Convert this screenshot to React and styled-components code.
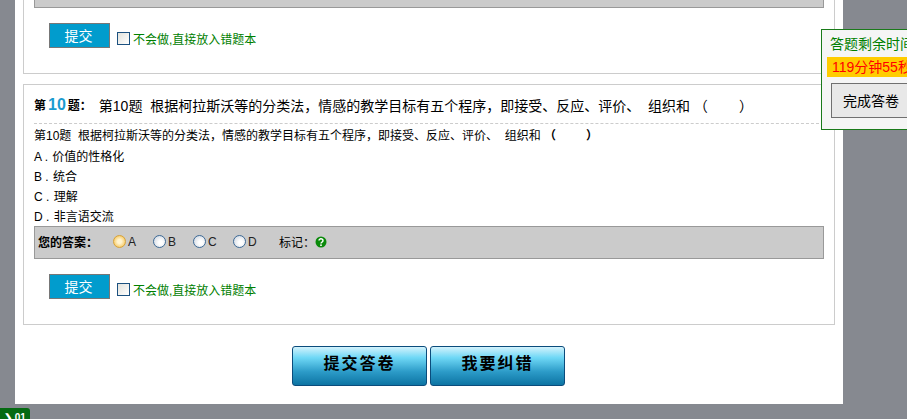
import { createGlobalStyle } from 'styled-components';
import styled from 'styled-components';

const GlobalStyle = createGlobalStyle`
  html, body {
    margin: 0;
    padding: 0;
    height: 100%;
    overflow: hidden;
    background: #868990;
    font-family: "Liberation Sans", "Noto Sans CJK SC", sans-serif;
    font-size: 12px;
    color: #000;
  }
`;

const OPTIONS = [
  { key: 'A', text: '价值的性格化', checked: true },
  { key: 'B', text: '统合' },
  { key: 'C', text: '理解' },
  { key: 'D', text: '非言语交流' },
];

const STEM = '第10题  根据柯拉斯沃等的分类法，情感的教学目标有五个程序，即接受、反应、评价、  组织和 （        ）';

function AnswerPanel({ name }) {
  return (
    <App.AnswerBar>
      <App.AnswerLabel>您的答案：</App.AnswerLabel>
      {OPTIONS.map((o) => (
        <App.Choice key={o.key}>
          <App.Radio type="radio" name={name} defaultChecked={o.checked} />
          {o.key}
        </App.Choice>
      ))}
      <App.Mark>
        标记：
        <svg width="12" height="12" viewBox="0 0 12 12">
          <circle cx="6" cy="6" r="5.5" fill="#0a8a0a" />
          <path d="M4 4.6a2 1.9 0 1 1 3 1.6c-.7.4-1 .7-1 1.4" fill="none" stroke="#fff" strokeWidth="1.5" />
          <rect x="5.2" y="8.4" width="1.6" height="1.6" fill="#fff" />
        </svg>
      </App.Mark>
    </App.AnswerBar>
  );
}

function SubmitRow() {
  return (
    <App.SubmitRow>
      <App.SubmitButton type="button">提交</App.SubmitButton>
      <App.WrongBook>
        <App.Check type="checkbox" />
        不会做,直接放入错题本
      </App.WrongBook>
    </App.SubmitRow>
  );
}

function App() {
  return (
    <>
      <GlobalStyle />
      <App.Page>
        <App.Card $cut>
          <App.BarEnd />
          <SubmitRow />
        </App.Card>
        <App.Card>
          <App.Title>
            <App.TitleNo>
              第<b>10</b>题：
            </App.TitleNo>
            <App.TitleText>{STEM}</App.TitleText>
          </App.Title>
          <App.Stem>第10题  根据柯拉斯沃等的分类法，情感的教学目标有五个程序，即接受、反应、评价、  组织和 <strong>（         ）</strong></App.Stem>
          {OPTIONS.map((o) => (
            <App.Option key={o.key}>{o.key} . <span>{o.text}</span></App.Option>
          ))}
          <AnswerPanel name="q10" />
          <SubmitRow />
        </App.Card>
        <App.Actions>
          <App.BigButton type="button">提交答卷</App.BigButton>
          <App.BigButton type="button">我要纠错</App.BigButton>
        </App.Actions>
      </App.Page>
      <App.Timer>
        <App.TimerTitle>答题剩余时间</App.TimerTitle>
        <App.TimerValue>119分钟55秒</App.TimerValue>
        <App.FinishButton type="button">完成答卷</App.FinishButton>
      </App.Timer>
      <App.Badge>❯ 01</App.Badge>
    </>
  );
}

App.Page = styled.div`
  box-sizing: border-box;
  width: 828px;
  height: 404px;
  margin-left: 15px;
  padding: 0 8px;
  background: #fff;
`;

App.Card = styled.div`
  box-sizing: border-box;
  border: 1px solid #ccc;
  border-top-width: ${(p) => (p.$cut ? 0 : '1px')};
  padding: 0 10px 25px;
  margin-bottom: 10px;
`;

App.BarEnd = styled.div`
  height: 7px;
  background: #cbcbcb;
  border: 1px solid #999;
  border-top: 0;
`;

App.AnswerBar = styled.div`
  box-sizing: border-box;
  height: 33px;
  display: flex;
  align-items: center;
  padding: 0 0 2px 3px;
  background: #cbcbcb;
  border: 1px solid #999;
`;

App.AnswerLabel = styled.b`
  width: 75px;
  font-size: 12px;
`;

App.Choice = styled.label`
  display: flex;
  align-items: center;
  width: 40px;
  font-size: 12px;
  color: #222;
`;

App.Radio = styled.input`
  appearance: none;
  box-sizing: border-box;
  width: 13px;
  height: 13px;
  margin: 0 2px 0 0;
  border-radius: 50%;
  border: 1px solid #3d6a96;
  background: radial-gradient(circle at 60% 60%, #fff 20%, #d4dbe4 80%);
  &:checked {
    border-color: #d7a23a;
    background: radial-gradient(circle, #fff3cf 25%, #f5c24e 90%);
  }
`;

App.Mark = styled.span`
  display: flex;
  align-items: center;
  margin-left: 6px;
  font-size: 12px;
`;

App.SubmitRow = styled.div`
  display: flex;
  align-items: flex-start;
  padding: 15px 0 0 15px;
`;

App.SubmitButton = styled.button`
  box-sizing: border-box;
  width: 61px;
  height: 25px;
  padding: 0 2px 2px 0;
  border: 1px solid #777;
  background: #019ccd;
  color: #fff;
  font: 14px "Liberation Sans", "Noto Sans CJK SC", sans-serif;
`;

App.WrongBook = styled.label`
  display: flex;
  align-items: center;
  margin: 8px 0 0 7px;
  height: 15px;
  color: #008000;
  font-size: 12px;
`;

App.Check = styled.input`
  appearance: none;
  box-sizing: border-box;
  width: 13px;
  height: 13px;
  margin: 0 3px 0 0;
  border: 1px solid #1c5180;
  background: linear-gradient(135deg, #e2e2dc, #fff);
`;

App.Title = styled.div`
  display: flex;
  align-items: center;
  box-sizing: content-box;
  height: 37px;
  padding-top: 1px;
  border-bottom: 1px dashed #ccc;
  overflow: hidden;
`;

App.TitleNo = styled.span`
  font-size: 12px;
  font-weight: bold;
  margin-right: 7px;
  b {
    font-size: 16px;
    color: #1a9bd0;
    margin: 0 2px;
  }
`;

App.TitleText = styled.span`
  font-size: 14px;
  white-space: pre;
`;

App.Stem = styled.div`
  height: 22px;
  line-height: 24px;
  white-space: pre;
  font-size: 12px;
`;

App.Option = styled.div`
  height: 20px;
  line-height: 22px;
  font-size: 12px;
  white-space: pre;
  span {
    margin-left: 1px;
  }
`;

App.Actions = styled.div`
  display: flex;
  justify-content: center;
  gap: 3px;
  padding: 11px 1px 0 0;
`;

App.BigButton = styled.button`
  box-sizing: border-box;
  width: 135px;
  height: 40px;
  padding: 0 0 8px;
  border: 1px solid #0b4c7c;
  border-radius: 3px;
  background: linear-gradient(#d3f2fc, #6fd8f6 28%, #2c9bc8 65%, #0d74a3);
  color: #000;
  font: bold 16px "Liberation Sans", "Noto Sans CJK SC", sans-serif;
  letter-spacing: 2px;
`;

App.Timer = styled.div`
  position: fixed;
  left: 821px;
  top: 29px;
  box-sizing: border-box;
  width: 130px;
  height: 101px;
  padding-top: 4px;
  border: 1px solid #1a7a1a;
  background: #f5f5f5;
`;

App.TimerTitle = styled.div`
  height: 22px;
  padding-left: 8px;
  line-height: 20px;
  color: #008000;
  font-size: 14px;
  white-space: nowrap;
`;

App.TimerValue = styled.div`
  height: 20px;
  margin: 1px 0 6px 5px;
  padding-left: 5px;
  line-height: 20px;
  background: #fc0;
  color: #f00;
  font-size: 14px;
  white-space: nowrap;
`;

App.FinishButton = styled.button`
  box-sizing: border-box;
  display: block;
  width: 80px;
  height: 35px;
  margin-left: 9px;
  padding: 0 0 2px;
  border: 1px solid #707070;
  background: #e8e8e8;
  color: #000;
  font: 14px "Liberation Sans", "Noto Sans CJK SC", sans-serif;
`;

App.Badge = styled.div`
  position: fixed;
  left: 0;
  top: 408px;
  width: 30px;
  height: 11px;
  overflow: hidden;
  border-radius: 0 3px 0 0;
  background: #056a12;
  color: #fff;
  font-size: 10px;
  font-weight: bold;
  line-height: 20px;
  padding-left: 4px;
  box-sizing: border-box;
  white-space: nowrap;
`;

export default App;
